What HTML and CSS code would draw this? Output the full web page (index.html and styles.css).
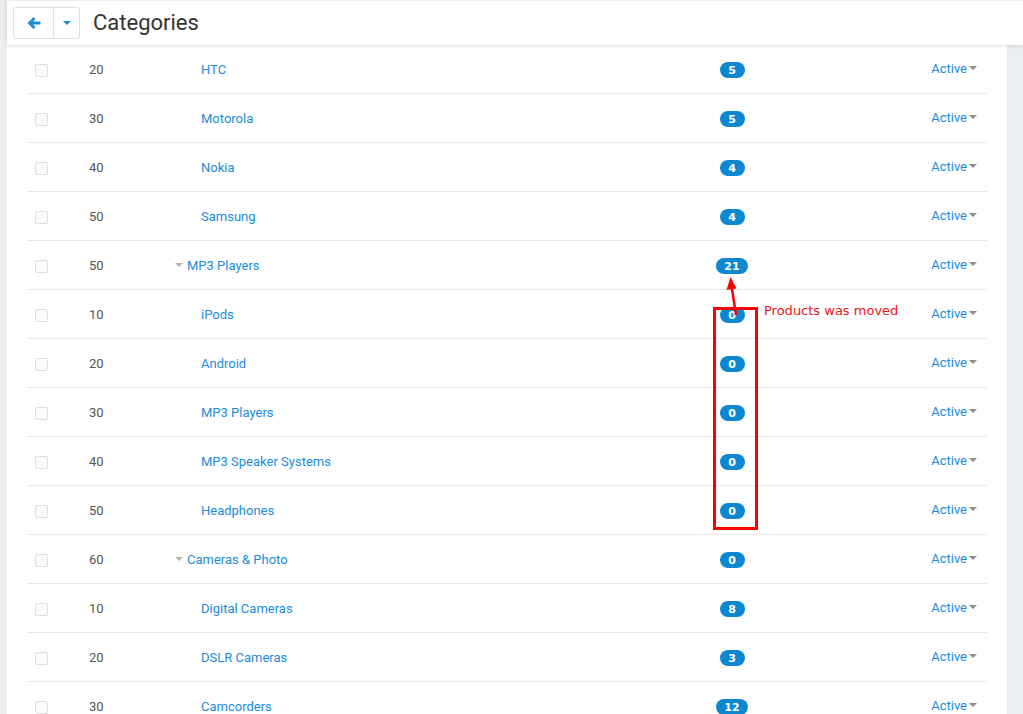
FILE: index.html
```html
<!DOCTYPE html>
<html lang="en">
<head>
    <meta charset="UTF-8">
    <title>Categories</title>
    <link rel="stylesheet" href="styles.css">
</head>
<body>
    <div class="page">
        <div class="header">
            <div class="btn-group">
                <span class="btn btn-back">
                    <svg width="14" height="14" viewBox="0 0 14 14"><path d="M0.5 7 L6.5 1 L8.5 3 L6 5.5 L13.5 5.5 L13.5 8.5 L6 8.5 L8.5 11 L6.5 13 Z" fill="#1a8cd8"/></svg>
                </span>
                <span class="btn btn-caret"><i class="caret caret-blue"></i></span>
            </div>
            <h1 class="title">Categories</h1>
        </div>
        <div class="content">
            <div class="table">
                <div class="row"><span class="cell-check"><i class="checkbox"></i></span><span class="cell-pos">20</span><span class="cell-name child"><a>HTC</a></span><span class="cell-count"><b class="badge">5</b></span><span class="cell-status"><a>Active</a><i class="caret"></i></span></div>
                <div class="row"><span class="cell-check"><i class="checkbox"></i></span><span class="cell-pos">30</span><span class="cell-name child"><a>Motorola</a></span><span class="cell-count"><b class="badge">5</b></span><span class="cell-status"><a>Active</a><i class="caret"></i></span></div>
                <div class="row"><span class="cell-check"><i class="checkbox"></i></span><span class="cell-pos">40</span><span class="cell-name child"><a>Nokia</a></span><span class="cell-count"><b class="badge">4</b></span><span class="cell-status"><a>Active</a><i class="caret"></i></span></div>
                <div class="row"><span class="cell-check"><i class="checkbox"></i></span><span class="cell-pos">50</span><span class="cell-name child"><a>Samsung</a></span><span class="cell-count"><b class="badge">4</b></span><span class="cell-status"><a>Active</a><i class="caret"></i></span></div>
                <div class="row"><span class="cell-check"><i class="checkbox"></i></span><span class="cell-pos">50</span><span class="cell-name"><i class="caret tree"></i><a>MP3 Players</a></span><span class="cell-count"><b class="badge">21</b></span><span class="cell-status"><a>Active</a><i class="caret"></i></span></div>
                <div class="row"><span class="cell-check"><i class="checkbox"></i></span><span class="cell-pos">10</span><span class="cell-name child"><a>iPods</a></span><span class="cell-count"><b class="badge">0</b></span><span class="cell-status"><a>Active</a><i class="caret"></i></span></div>
                <div class="row"><span class="cell-check"><i class="checkbox"></i></span><span class="cell-pos">20</span><span class="cell-name child"><a>Android</a></span><span class="cell-count"><b class="badge">0</b></span><span class="cell-status"><a>Active</a><i class="caret"></i></span></div>
                <div class="row"><span class="cell-check"><i class="checkbox"></i></span><span class="cell-pos">30</span><span class="cell-name child"><a>MP3 Players</a></span><span class="cell-count"><b class="badge">0</b></span><span class="cell-status"><a>Active</a><i class="caret"></i></span></div>
                <div class="row"><span class="cell-check"><i class="checkbox"></i></span><span class="cell-pos">40</span><span class="cell-name child"><a>MP3 Speaker Systems</a></span><span class="cell-count"><b class="badge">0</b></span><span class="cell-status"><a>Active</a><i class="caret"></i></span></div>
                <div class="row"><span class="cell-check"><i class="checkbox"></i></span><span class="cell-pos">50</span><span class="cell-name child"><a>Headphones</a></span><span class="cell-count"><b class="badge">0</b></span><span class="cell-status"><a>Active</a><i class="caret"></i></span></div>
                <div class="row"><span class="cell-check"><i class="checkbox"></i></span><span class="cell-pos">60</span><span class="cell-name"><i class="caret tree"></i><a>Cameras &amp; Photo</a></span><span class="cell-count"><b class="badge">0</b></span><span class="cell-status"><a>Active</a><i class="caret"></i></span></div>
                <div class="row"><span class="cell-check"><i class="checkbox"></i></span><span class="cell-pos">10</span><span class="cell-name child"><a>Digital Cameras</a></span><span class="cell-count"><b class="badge">8</b></span><span class="cell-status"><a>Active</a><i class="caret"></i></span></div>
                <div class="row"><span class="cell-check"><i class="checkbox"></i></span><span class="cell-pos">20</span><span class="cell-name child"><a>DSLR Cameras</a></span><span class="cell-count"><b class="badge">3</b></span><span class="cell-status"><a>Active</a><i class="caret"></i></span></div>
                <div class="row"><span class="cell-check"><i class="checkbox"></i></span><span class="cell-pos">30</span><span class="cell-name child"><a>Camcorders</a></span><span class="cell-count"><b class="badge">12</b></span><span class="cell-status"><a>Active</a><i class="caret"></i></span></div>
            </div>

            <!-- annotation drawn over the screenshot -->
            <div class="note-box"></div>
            <svg class="note-arrow" width="20" height="40" viewBox="0 0 20 40">
                <line x1="12" y1="38" x2="8" y2="12" stroke="#ff0000" stroke-width="2.5"/>
                <polygon points="6.5,0 2.5,13 12.5,11.5" fill="#ff0000"/>
            </svg>
            <span class="note-text">Products was moved</span>
        </div>
    </div>
</body>
</html>
```

FILE: styles.css
```css
html, body {
    margin: 0;
    height: 714px;
    overflow: hidden;
}
body {
    background-color: #ebeef1;
    font-family: Roboto, Arial, sans-serif;
    font-size: 13px;
    color: #555;
}
.page {
    margin-left: 7px;
}
.header {
    position: relative;
    z-index: 2;
    height: 44px;
    background-color: #fff;
    border-top: 1px solid #ececec;
    box-shadow: 0 1px 4px rgba(0, 0, 0, 0.13);
    display: flex;
    align-items: center;
    padding-left: 6px;
}
.btn-group {
    display: flex;
    height: 30px;
    margin-top: -1px;
    border: 1px solid #dcdfe3;
    border-radius: 3px;
    background-color: #fff;
}
.btn {
    display: flex;
    align-items: center;
    justify-content: center;
}
.btn-back {
    width: 39px;
    border-right: 1px solid #dcdfe3;
}
.btn-caret {
    width: 25px;
}
.title {
    margin: -2px 0 0 13px;
    font-size: 22px;
    font-weight: normal;
    color: #333;
}
.content {
    position: relative;
    width: 960px;
    background-color: #fff;
    padding: 0 20px;
    height: 680px;
}
.row {
    display: grid;
    grid-template-columns: 62px 86px 532px 50px 1fr;
    align-items: center;
    height: 48px;
    border-bottom: 1px solid #e8e8e8;
}
.cell-check {
    padding-left: 8px;
    padding-top: 2px;
    display: flex;
}
.checkbox {
    width: 11px;
    height: 11px;
    border: 1px solid #dedede;
    border-radius: 2px;
    background-color: #fbfbfb;
}
.cell-pos {
    color: #555;
}
.cell-name a, .cell-status a {
    color: #1a8cd8;
}
.cell-name {
    display: flex;
    align-items: center;
}
.cell-name.child {
    padding-left: 26px;
}
.cell-count {
    text-align: center;
    padding-top: 2px;
}
.badge {
    display: inline-block;
    min-width: 9px;
    padding: 0 8px;
    height: 16px;
    line-height: 17px;
    border-radius: 8px;
    background-color: #0d87cf;
    color: #fff;
    font-size: 11px;
    font-weight: bold;
    font-family: "DejaVu Sans", Verdana, sans-serif;
}
.cell-status {
    display: flex;
    justify-content: flex-end;
    align-items: center;
    padding-right: 10px;
    margin-top: -2px;
}
.caret {
    display: inline-block;
    width: 0;
    height: 0;
    border-left: 4px solid transparent;
    border-right: 4px solid transparent;
    border-top: 4px solid #8c8c8c;
    margin-left: 2px;
}
.caret.tree {
    border-top-color: #b5b5b5;
    margin: 0 4px 0 0;
}
.caret-blue {
    border-top-color: #1a8cd8;
    margin: 0;
}
.note-box {
    position: absolute;
    left: 706px;
    top: 262px;
    width: 39px;
    height: 217px;
    border: 3px solid #ff0000;
}
.note-arrow {
    position: absolute;
    left: 717px;
    top: 232px;
}
.note-text {
    position: absolute;
    left: 757px;
    top: 258px;
    color: #e8141a;
    font-family: "DejaVu Sans", Verdana, sans-serif;
    font-size: 13px;
}
```
